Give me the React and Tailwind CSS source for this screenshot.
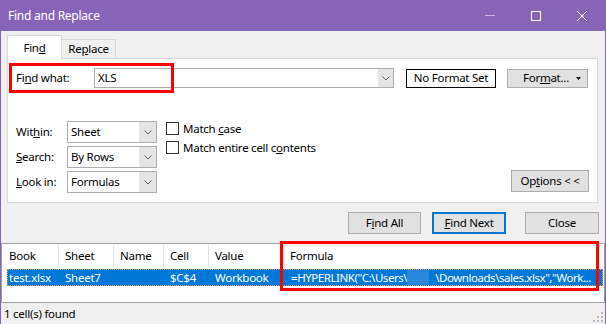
import { useState } from 'react'

const Chevron = () => (
    <svg width="8" height="5" viewBox="0 0 8 5" className="block">
        <path d="M0.5 0.5 L4 4 L7.5 0.5" fill="none" stroke="#606060" strokeWidth="1" />
    </svg>
)

function Select({ value }) {
    return (
        <div className="w-[90px] h-[22px] flex border border-[#adadad] bg-white">
            <div className="flex-1 flex items-center pl-[3px]">{value}</div>
            <div className="w-[17px] flex items-center justify-center bg-[#e5e5e5]">
                <Chevron />
            </div>
        </div>
    )
}

function Check({ children }) {
    return (
        <div className="h-[13px] flex items-center gap-[4px]">
            <div className="w-[13px] h-[13px] border border-[#333333] bg-white" />
            <span>{children}</span>
        </div>
    )
}

function Button({ children, primary, className = '' }) {
    return (
        <button
            className={
                'h-[22px] flex items-center justify-center bg-[#e1e1e1] ' +
                (primary ? 'border-2 border-[#0078d7] ' : 'border border-[#adadad] ') +
                className
            }
        >
            {children}
        </button>
    )
}

export default function App() {
    const [what] = useState('XLS')

    return (
        <div className="w-[606px] h-[324px] relative overflow-hidden flex flex-col bg-[#f0f0f0] border-x border-[#8764b8] text-[11.5px] tracking-[-0.25px] leading-[16px] text-black font-['Noto_Sans','Liberation_Sans',sans-serif]">
            {/* title bar */}
            <div className="h-[31px] shrink-0 flex items-center bg-[#8764b8] text-white">
                <div className="pl-[7px] text-[12px]">Find and Replace</div>
                <div className="ml-auto flex h-full">
                    <div className="w-[46px] flex items-center justify-center">
                        <div className="w-[10px] h-px bg-[#c9b8e0]" />
                    </div>
                    <div className="w-[46px] flex items-center justify-center">
                        <div className="w-[10px] h-[10px] border border-white" />
                    </div>
                    <div className="w-[46px] flex items-center justify-center">
                        <svg width="10" height="10" viewBox="0 0 10 10">
                            <path d="M0 0 L10 10 M10 0 L0 10" stroke="white" strokeWidth="1" />
                        </svg>
                    </div>
                </div>
            </div>

            {/* tabs */}
            <div className="flex items-end pl-[6px] pt-[4px]">
                <div className="relative z-10 w-[55px] h-[24px] -mb-px flex items-center justify-center bg-white border border-b-0 border-[#d9d9d9]">
                    Fin<u>d</u>
                </div>
                <div className="w-[54px] h-[19px] flex items-center justify-center bg-[#f0f0f0] border border-l-0 border-b-0 border-[#d9d9d9]">
                    Re<u>p</u>lace
                </div>
            </div>

            {/* panel */}
            <div className="ml-[6px] w-[591px] h-[145px] shrink-0 flex flex-col bg-white border border-[#d9d9d9] pl-[8px]">
                <div className="mt-[9px] h-[20px] flex items-center">
                    <div className="w-[78px]">Fi<u>n</u>d what:</div>
                    <div className="w-[300px] h-[20px] flex border border-[#adadad]">
                        <div className="flex-1 flex items-center pl-[3px]">{what}</div>
                        <div className="w-[15px] flex items-center justify-center bg-[#e5e5e5]">
                            <Chevron />
                        </div>
                    </div>
                    <div className="ml-[12px] w-[90px] h-[19px] flex items-center justify-center border border-black bg-white">
                        No Format Set
                    </div>
                    <div className="ml-[11px] w-[81px] h-[19px] flex items-center bg-[#e1e1e1] border border-[#adadad]">
                        <span className="flex-1 text-center pl-[8px]">For<u>m</u>at...</span>
                        <svg width="5" height="3" viewBox="0 0 5 3" className="mr-[6px]">
                            <path d="M0 0 H5 L2.5 3 Z" fill="#000" />
                        </svg>
                    </div>
                </div>

                <div className="mt-[33px] flex">
                    <div className="flex flex-col gap-[3px]">
                        <div className="flex items-center">
                            <div className="w-[51px]">Wit<u>h</u>in:</div>
                            <Select value="Sheet" />
                        </div>
                        <div className="flex items-center">
                            <div className="w-[51px]"><u>S</u>earch:</div>
                            <Select value="By Rows" />
                        </div>
                        <div className="flex items-center">
                            <div className="w-[51px]"><u>L</u>ook in:</div>
                            <Select value="Formulas" />
                        </div>
                    </div>
                    <div className="ml-[9px] mt-[1px] flex flex-col gap-[6px]">
                        <Check>Match <u>c</u>ase</Check>
                        <Check>Match entire cell c<u>o</u>ntents</Check>
                    </div>
                    <Button className="ml-auto mr-[8px] mb-px self-end w-[78px]">
                        Op<u>t</u>ions &lt; &lt;
                    </Button>
                </div>
            </div>

            {/* buttons */}
            <div className="mt-[9px] flex justify-end pr-[6px]">
                <Button className="w-[73px]">F<u>i</u>nd All</Button>
                <Button primary className="ml-[11px] w-[74px]"><u>F</u>ind Next</Button>
                <Button className="ml-[19px] w-[74px]">Close</Button>
            </div>

            {/* results */}
            <div className="mt-[9px] h-[60px] shrink-0 flex flex-col bg-white border-y border-x border-[#a0a0a0]">
                <div className="h-[24px] flex items-center">
                    <div className="w-[57px] h-[22px] flex items-center pl-[7px] border-r border-[#e5e5e5]">Book</div>
                    <div className="w-[55px] h-[22px] flex items-center pl-[6px] border-r border-[#e5e5e5]">Sheet</div>
                    <div className="w-[50px] h-[22px] flex items-center pl-[6px] border-r border-[#e5e5e5]">Name</div>
                    <div className="w-[45px] h-[22px] flex items-center pl-[6px] border-r border-[#e5e5e5]">Cell</div>
                    <div className="w-[75px] h-[22px] flex items-center pl-[6px] border-r border-[#e5e5e5]">Value</div>
                    <div className="flex-1 h-[22px] flex items-center pl-[6px]">Formula</div>
                </div>
                <div className="ml-[5px] mr-px mt-px h-[17px] flex items-center bg-[#0078d7] text-white border border-dotted border-[#e9a25a] whitespace-nowrap overflow-hidden">
                    <div className="w-[51px] pl-px">test.xlsx</div>
                    <div className="w-[55px] pl-[6px]">Sheet7</div>
                    <div className="w-[50px] pl-[6px]"></div>
                    <div className="w-[45px] pl-[6px]">$C$4</div>
                    <div className="w-[75px] pl-[6px]">Workbook</div>
                    <div className="flex-1 pl-[7px] flex items-center overflow-hidden tracking-[-0.45px]">
                        <span>=HYPERLINK("C:\Users\</span>
                        <span className="inline-block w-[22px] h-[15px] bg-[#2a86dc]" />
                        <span className="ml-[6px]">\Downloads\sales.xlsx","Work...</span>
                    </div>
                </div>
            </div>

            {/* status */}
            <div className="flex-1 flex items-center pl-[3px]">1 cell(s) found</div>

            <svg width="10" height="10" viewBox="0 0 10 10" className="absolute right-[2px] bottom-[2px]">
                <g fill="#b8b8b8">
                    <rect x="8" y="0" width="2" height="2" />
                    <rect x="4" y="4" width="2" height="2" />
                    <rect x="8" y="4" width="2" height="2" />
                    <rect x="0" y="8" width="2" height="2" />
                    <rect x="4" y="8" width="2" height="2" />
                    <rect x="8" y="8" width="2" height="2" />
                </g>
            </svg>

            {/* annotation boxes */}
            <div className="absolute left-[8px] top-[63px] w-[165px] h-[30px] border-[3px] border-[#ff0000]" />
            <div className="absolute left-[279px] top-[241px] w-[319px] h-[50px] border-[3px] border-[#ff0000]" />
        </div>
    )
}
